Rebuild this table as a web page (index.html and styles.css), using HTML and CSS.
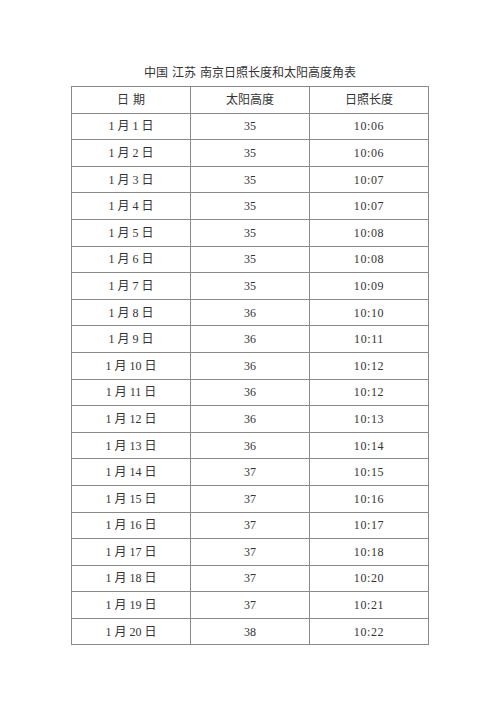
FILE: index.html
```html
<!DOCTYPE html>
<html lang="zh-CN">
<head>
<meta charset="utf-8">
<title>南京日照长度和太阳高度角表</title>
<link rel="stylesheet" href="styles.css">
</head>
<body>
<div class="page">
  <div class="title">中国<span class="gap"></span>江苏<span class="gap"></span>南京日照长度和太阳高度角表</div>
  <table class="sun">
    <thead>
      <tr><th>日<span class="gap"></span>期</th><th>太阳高度</th><th>日照长度</th></tr>
    </thead>
    <tbody>
      <tr><td>1 月 1 日</td><td>35</td><td>10:06</td></tr>
      <tr><td>1 月 2 日</td><td>35</td><td>10:06</td></tr>
      <tr><td>1 月 3 日</td><td>35</td><td>10:07</td></tr>
      <tr><td>1 月 4 日</td><td>35</td><td>10:07</td></tr>
      <tr><td>1 月 5 日</td><td>35</td><td>10:08</td></tr>
      <tr><td>1 月 6 日</td><td>35</td><td>10:08</td></tr>
      <tr><td>1 月 7 日</td><td>35</td><td>10:09</td></tr>
      <tr><td>1 月 8 日</td><td>36</td><td>10:10</td></tr>
      <tr><td>1 月 9 日</td><td>36</td><td>10:11</td></tr>
      <tr><td>1 月 10 日</td><td>36</td><td>10:12</td></tr>
      <tr><td>1 月 11 日</td><td>36</td><td>10:12</td></tr>
      <tr><td>1 月 12 日</td><td>36</td><td>10:13</td></tr>
      <tr><td>1 月 13 日</td><td>36</td><td>10:14</td></tr>
      <tr><td>1 月 14 日</td><td>37</td><td>10:15</td></tr>
      <tr><td>1 月 15 日</td><td>37</td><td>10:16</td></tr>
      <tr><td>1 月 16 日</td><td>37</td><td>10:17</td></tr>
      <tr><td>1 月 17 日</td><td>37</td><td>10:18</td></tr>
      <tr><td>1 月 18 日</td><td>37</td><td>10:20</td></tr>
      <tr><td>1 月 19 日</td><td>37</td><td>10:21</td></tr>
      <tr><td>1 月 20 日</td><td>38</td><td>10:22</td></tr>
    </tbody>
  </table>
</div>
</body>
</html>
```
FILE: styles.css
```css
html, body {
  margin: 0;
  padding: 0;
  background: #ffffff;
}
body {
  font-family: "Liberation Serif", "Noto Sans CJK SC", serif;
  color: #333333;
}
.page {
  width: 358px;
  margin: 0 auto;
  padding-top: 64px;
}
.title {
  font-size: 12px;
  line-height: 18px;
  height: 18px;
  text-align: center;
  margin-bottom: 4px;
  color: #333333;
}
.gap {
  display: inline-block;
  width: 4px;
}
.sun {
  width: 358px;
  border-collapse: collapse;
  table-layout: fixed;
  font-size: 12px;
}
.sun th,
.sun td {
  border: 1px solid #8a8a8a;
  height: 26.6px;
  padding: 0;
  box-sizing: border-box;
  text-align: center;
  vertical-align: middle;
  font-weight: normal;
  line-height: 14px;
}
.sun td:nth-child(3) {
  letter-spacing: 0.6px;
}
```
